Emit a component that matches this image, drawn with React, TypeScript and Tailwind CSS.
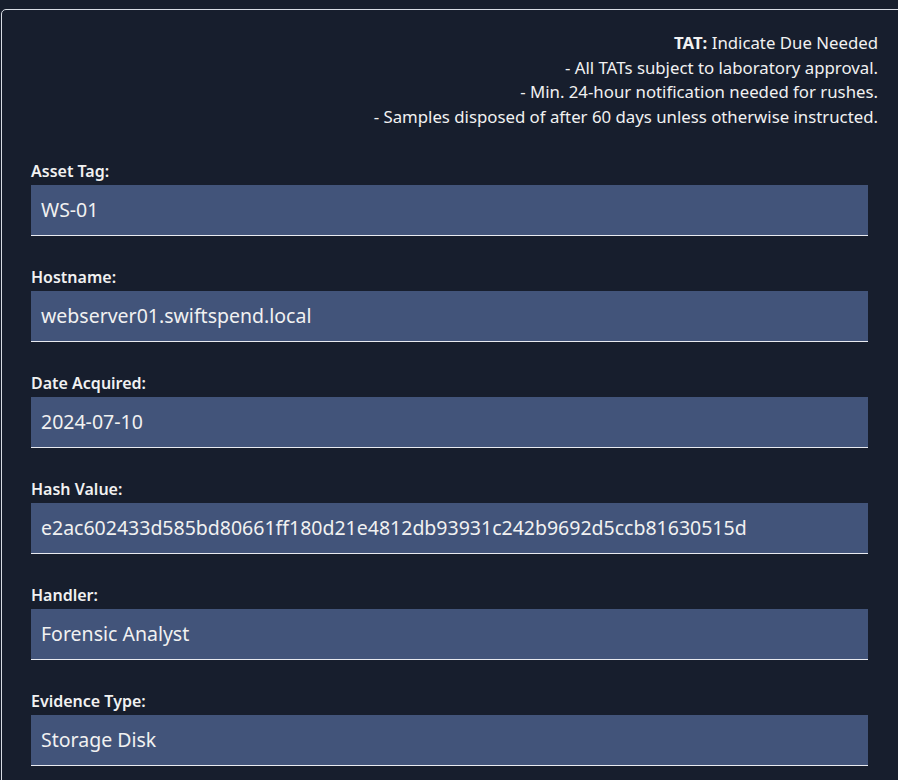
import React from "react";

const fields: [string, string][] = [
  ["Asset Tag:", "WS-01"],
  ["Hostname:", "webserver01.swiftspend.local"],
  ["Date Acquired:", "2024-07-10"],
  ["Hash Value:", "e2ac602433d585bd80661ff180d21e4812db93931c242b9692d5ccb81630515d"],
  ["Handler:", "Forensic Analyst"],
  ["Evidence Type:", "Storage Disk"],
];

export default function App() {
  return (
    <div
      className="w-[898px] h-[780px] overflow-hidden bg-[#171e2d] pt-[9px] pl-[1px]"
      style={{ fontFamily: '"Noto Sans", "Open Sans", sans-serif' }}
    >
      <div className="w-[910px] h-[800px] border border-[#d8dce4] rounded-[5px] bg-[#171e2d] pl-[29px] pr-[31px] pt-[21px]">
        <div className="text-right text-[#f1f1f1] text-[16.8px] leading-[24.5px] pr-[1px]">
          <div>
            <span className="font-bold">TAT:</span> Indicate Due Needed
          </div>
          <div>- All TATs subject to laboratory approval.</div>
          <div>- Min. 24-hour notification needed for rushes.</div>
          <div>- Samples disposed of after 60 days unless otherwise instructed.</div>
        </div>
        <div className="mt-[32px] w-[837px] flex flex-col gap-[31px]">
          {fields.map(([label, value]) => (
            <div key={label} className="flex flex-col">
              <div className="text-[16px] leading-[20px] font-semibold text-[#f1f1f1] mb-[4px]">
                {label}
              </div>
              <div className="h-[51px] bg-[#42547a] border-b border-[#e8eaf0] flex items-center px-[10px] text-[19.5px] text-[#f1f1f1]">
                {value}
              </div>
            </div>
          ))}
        </div>
      </div>
    </div>
  );
}
